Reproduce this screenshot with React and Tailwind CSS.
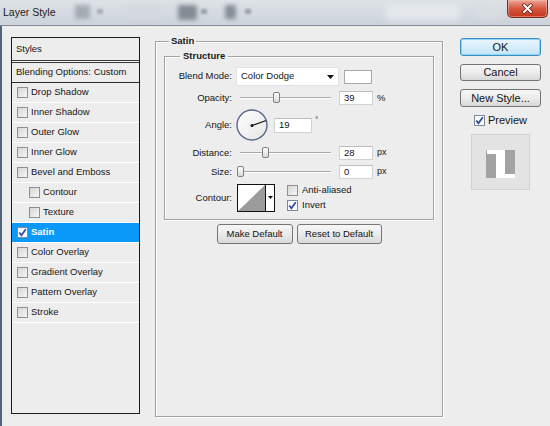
import React from "react";

function Check({ checked, selected }) {
  return (
    <span
      className={`w-[11px] h-[11px] border shrink-0 flex items-center justify-center ${
        selected || checked
          ? "border-[#7a8a9c] bg-gradient-to-br from-[#f4f4f4] to-white"
          : "border-[#8f8f8f] bg-gradient-to-br from-[#d6d6d6] to-[#f6f6f6]"
      }`}
    >
      {checked && (
        <svg width="9" height="9" viewBox="0 0 9 9">
          <path d="M1.3 4.6 L3.4 7.3 L7.8 1.2" stroke="#2a4a9c" strokeWidth="1.7" fill="none" />
        </svg>
      )}
    </span>
  );
}

const items = [
  { label: "Drop Shadow" },
  { label: "Inner Shadow" },
  { label: "Outer Glow" },
  { label: "Inner Glow" },
  { label: "Bevel and Emboss" },
  { label: "Contour", indent: true },
  { label: "Texture", indent: true },
  { label: "Satin", checked: true, selected: true },
  { label: "Color Overlay" },
  { label: "Gradient Overlay" },
  { label: "Pattern Overlay" },
  { label: "Stroke" },
];

function Slider({ pos }) {
  return (
    <div className="relative w-[91px] h-[14px] ml-[8px] shrink-0">
      <div className="absolute left-0 right-0 top-[6px] h-px bg-[#a9a9a9] shadow-[0_1px_0_#ffffff]" />
      <div
        className="absolute top-[1px] w-[7px] h-[11px] rounded-[2px] border border-[#808080] bg-gradient-to-b from-white to-[#d9d9d9]"
        style={{ left: pos }}
      />
    </div>
  );
}

function Input({ value, w }) {
  return (
    <div
      className={`${w} bg-white border border-[#d2d2d2] border-t-[#bdbdbd] flex items-center pl-[4px] text-[9.5px] leading-none`}
    >
      {value}
    </div>
  );
}

function SmallButton({ children, w }) {
  return (
    <div
      className={`${w} h-[20px] rounded-[3px] border border-[#767676] bg-gradient-to-b from-[#f7f7f7] via-[#ebebeb] to-[#d9d9d9] flex items-center justify-center text-[9.5px] text-[#111]`}
    >
      {children}
    </div>
  );
}

export default function App() {
  return (
    <div className="w-[550px] h-[426px] bg-[#ededed] flex flex-col overflow-hidden font-['Liberation_Sans',Arial,sans-serif] text-[#151515]">
      {/* Title bar */}
      <div className="h-[26px] shrink-0 border-b border-[#858b91] bg-gradient-to-b from-[#dde2e7] to-[#ccd3da] flex items-start overflow-hidden">
        <span className="mt-[6px] ml-[3px] text-[10.5px] leading-[12px] text-[#1a1a1a]">Layer Style</span>
        <div className="ml-[19px] mt-[5px] w-[15px] h-[14px] bg-[#a3abb3] blur-[2px] rounded-[2px]" />
        <div className="ml-[7px] mt-[9px] w-[6px] h-[5px] bg-[#a9b0b7] blur-[1px]" />
        <div className="ml-[24px] mt-[6px] w-[35px] h-[12px] bg-[#d3d9de] blur-[3px] rounded" />
        <div className="ml-[16px] mt-[5px] w-[19px] h-[15px] bg-[#838c95] blur-[2px] rounded-[2px]" />
        <div className="ml-[4px] mt-[9px] w-[6px] h-[5px] bg-[#9aa2aa] blur-[1px]" />
        <div className="ml-[18px] mt-[5px] w-[11px] h-[14px] bg-[#858e97] blur-[2px] rounded-[2px]" />
        <div className="ml-[9px] mt-[9px] w-[6px] h-[5px] bg-[#9aa2aa] blur-[1px]" />
        <div className="ml-[134px] mt-[4px] w-[75px] h-[16px] bg-[#e4e8ec] blur-[3px] rounded-[3px]" />
        <div className="ml-[18px] mt-[6px] w-[24px] h-[12px] bg-[#d9dee3] blur-[3px] rounded" />
        <div className="ml-auto mr-[2px] w-[41px] h-[18px] rounded-b-[5px] border border-t-0 border-[#7b2a1f] bg-gradient-to-b from-[#eaa595] via-[#d6573f] to-[#c3351e] flex items-center justify-center shadow-[inset_0_0_0_1px_rgba(255,200,190,0.45)]">
          <svg width="13" height="11" viewBox="0 0 13 11">
            <path d="M3 2 L10 9 M10 2 L3 9" stroke="#5a1a12" strokeWidth="3.4" strokeLinecap="round" />
            <path d="M3 2 L10 9 M10 2 L3 9" stroke="#ffffff" strokeWidth="2" strokeLinecap="round" />
          </svg>
        </div>
      </div>

      {/* Body */}
      <div className="flex-1 flex items-start border-l-2 border-[#4f6379]">
        {/* Left styles list */}
        <div className="ml-[9px] mt-[11px] w-[129px] h-[377px] border border-[#1c1c1c] flex flex-col text-[9.5px] shrink-0">
          <div className="h-[22px] flex items-center pl-[4px]">Styles</div>
          <div className="h-[3px] border-y border-[#3a3a3a] bg-[#f4f4f4]" />
          <div className="h-[20px] flex items-center pl-[4px] border-b border-[#2c2c2c]">Blending Options: Custom</div>
          {items.map((it) => (
            <div
              key={it.label}
              className={`h-[20px] border-b border-white flex items-center gap-[3px] ${
                it.indent ? "pl-[17px]" : "pl-[5px]"
              } ${it.selected ? "bg-[#0a98f9] text-white font-bold" : ""}`}
            >
              <Check checked={it.checked} selected={it.selected} />
              <span>{it.label}</span>
            </div>
          ))}
        </div>

        {/* Middle settings */}
        <fieldset className="ml-[15px] mt-[9px] w-[288px] h-[382px] border border-[#a2a2a2] shadow-[inset_1px_1px_0_#ffffff,1px_1px_0_#ffffff] shrink-0">
          <legend className="ml-[13px] px-[2px] text-[9.5px] leading-[12px] font-bold">Satin</legend>
          <fieldset className="mx-[8px] mt-[3px] border border-[#a2a2a2] shadow-[inset_1px_1px_0_#ffffff,1px_1px_0_#ffffff] pb-[7px] text-[9.5px]">
            <legend className="ml-[15px] px-[3px] leading-[12px] font-bold">Structure</legend>

            {/* Blend mode */}
            <div className="mt-[5px] h-[19px] flex items-center">
              <span className="w-[67px] text-right">Blend Mode:</span>
              <div className="ml-[4px] w-[103px] h-[19px] bg-white border border-[#e2e2e2] flex items-center pl-[4px] pr-[4px]">
                <span className="flex-1">Color Dodge</span>
                <svg width="7" height="4" viewBox="0 0 7 4">
                  <path d="M0 0 L7 0 L3.5 4 Z" fill="#111" />
                </svg>
              </div>
              <div className="ml-[5px] w-[28px] h-[14px] bg-white border border-[#a8a8a8]" />
            </div>

            {/* Opacity */}
            <div className="mt-[5px] h-[14px] flex items-center">
              <span className="w-[67px] text-right">Opacity:</span>
              <Slider pos={33} />
              <div className="ml-[8px] h-[14px] flex">
                <Input value="39" w="w-[34px]" />
              </div>
              <span className="ml-[4px]">%</span>
            </div>

            {/* Angle */}
            <div className="mt-[4px] h-[32px] flex items-center">
              <span className="w-[67px] text-right">Angle:</span>
              <div className="ml-[4px] w-[32px] h-[32px]">
                <svg width="32" height="32" viewBox="0 0 32 32">
                  <defs>
                    <linearGradient id="dial" x1="0" y1="0" x2="1" y2="1">
                      <stop offset="0" stopColor="#ffffff" />
                      <stop offset="1" stopColor="#e6e6e6" />
                    </linearGradient>
                  </defs>
                  <circle cx="16" cy="16" r="15" fill="url(#dial)" stroke="#56688a" strokeWidth="1.4" />
                  <line x1="16" y1="16.5" x2="30.2" y2="11.6" stroke="#111" strokeWidth="1.1" />
                  <circle cx="16" cy="16.5" r="1.5" fill="#111" />
                </svg>
              </div>
              <div className="ml-[6px] h-[15px] flex">
                <Input value="19" w="w-[38px]" />
              </div>
              <span className="ml-[3px] self-start mt-[7px] text-[8px] leading-none">°</span>
            </div>

            {/* Distance */}
            <div className="mt-[5px] h-[14px] flex items-center">
              <span className="w-[67px] text-right">Distance:</span>
              <Slider pos={22} />
              <div className="ml-[8px] h-[14px] flex">
                <Input value="28" w="w-[34px]" />
              </div>
              <span className="ml-[4px] text-[9px]">px</span>
            </div>

            {/* Size */}
            <div className="mt-[5px] h-[14px] flex items-center">
              <span className="w-[67px] text-right">Size:</span>
              <Slider pos={-3} />
              <div className="ml-[8px] h-[14px] flex">
                <Input value="0" w="w-[34px]" />
              </div>
              <span className="ml-[4px] text-[9px]">px</span>
            </div>

            {/* Contour */}
            <div className="mt-[5px] h-[28px] flex items-center">
              <span className="w-[67px] text-right">Contour:</span>
              <div className="ml-[5px] w-[38px] h-[28px]">
                <svg width="38" height="28" viewBox="0 0 38 28">
                  <rect x="0.5" y="0.5" width="37" height="27" fill="#ffffff" stroke="#111" />
                  <path d="M1 27 L28 1 L28 27 Z" fill="#9b9b9b" />
                  <line x1="28.5" y1="0.5" x2="28.5" y2="27.5" stroke="#111" />
                  <path d="M31 12 L36 12 L33.5 15 Z" fill="#111" />
                </svg>
              </div>
              <div className="ml-[12px] flex flex-col gap-[3px]">
                <div className="flex items-center gap-[4px] h-[12px]">
                  <Check />
                  <span>Anti-aliased</span>
                </div>
                <div className="flex items-center gap-[4px] h-[12px]">
                  <Check checked />
                  <span>Invert</span>
                </div>
              </div>
            </div>
          </fieldset>

          <div className="mt-[4px] flex justify-center gap-[4px]">
            <SmallButton w="w-[76px]">Make Default</SmallButton>
            <SmallButton w="w-[85px]">Reset to Default</SmallButton>
          </div>
        </fieldset>

        {/* Right column */}
        <div className="ml-[17px] mt-[12px] w-[81px] flex flex-col items-center text-[11px] shrink-0">
          <div className="w-full h-[18px] rounded-[3px] border border-[#3c8fc4] bg-gradient-to-b from-[#eaf6fd] via-[#d7effc] to-[#bfe4f8] shadow-[inset_0_0_0_1px_#8fd6f6] flex items-center justify-center">
            OK
          </div>
          <div className="mt-[8px] w-full h-[17px] rounded-[3px] border border-[#737373] bg-gradient-to-b from-[#f6f6f6] via-[#ececec] to-[#d8d8d8] flex items-center justify-center">
            Cancel
          </div>
          <div className="mt-[8px] w-full h-[18px] rounded-[3px] border border-[#737373] bg-gradient-to-b from-[#f6f6f6] via-[#ececec] to-[#d8d8d8] flex items-center justify-center">
            New Style...
          </div>
          <div className="mt-[7px] h-[13px] flex items-center gap-[3px]">
            <Check checked />
            <span>Preview</span>
          </div>
          <div className="mt-[7px] w-[59px] h-[56px] bg-[#e3e3e3] border border-[#d2d2d2] flex items-center justify-center pt-[4px]">
            <svg width="29" height="28" viewBox="0 0 29 28">
              <rect x="0" y="0" width="29" height="28" fill="#a3a3a3" />
              <rect x="1" y="0" width="18" height="4" fill="#ffffff" />
              <rect x="10" y="0" width="9" height="28" fill="#ffffff" />
              <rect x="10" y="24" width="19" height="4" fill="#ffffff" />
            </svg>
          </div>
        </div>
      </div>
    </div>
  );
}
